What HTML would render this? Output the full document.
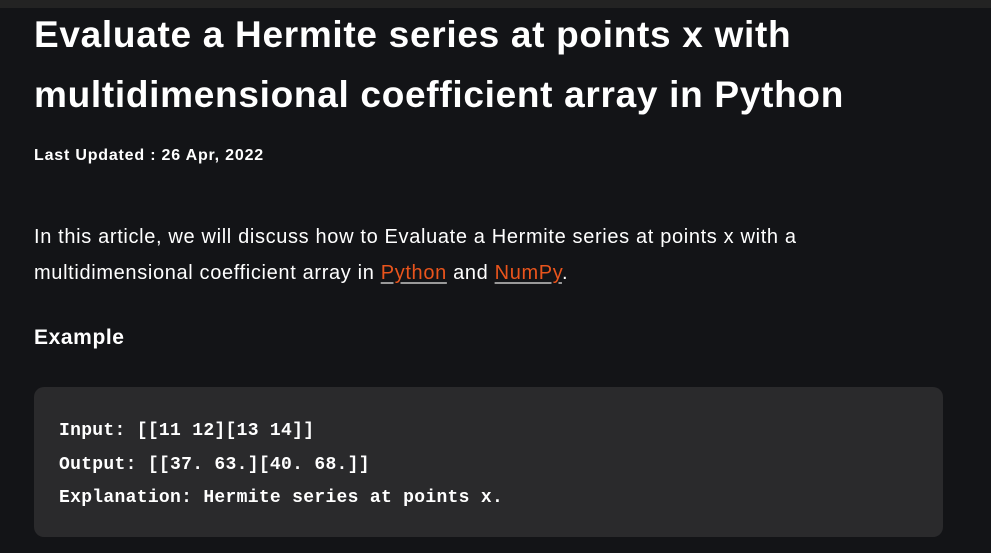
<!DOCTYPE html>
<html><head><meta charset="utf-8"><style>
html,body{margin:0;padding:0;}
body{width:991px;height:553px;background:#131417;overflow:hidden;position:relative;font-family:"Liberation Sans",sans-serif;color:#fff;}
.top{position:absolute;left:0;top:0;width:991px;height:8px;background:#232323;}
h1{position:absolute;left:34px;top:5px;margin:0;font-size:37px;line-height:60px;font-weight:bold;letter-spacing:0.7px;width:950px;white-space:nowrap;}
.date{position:absolute;left:34px;top:147px;font-size:16px;font-weight:bold;letter-spacing:0.8px;}
.p{position:absolute;left:34px;top:219px;font-size:20px;line-height:36px;letter-spacing:0.65px;width:950px;white-space:nowrap;}
.p a{color:#e9541c;text-decoration:underline;text-decoration-color:#999;text-underline-offset:3px;}
.ex{position:absolute;left:34px;top:326px;font-size:21px;font-weight:bold;letter-spacing:0.6px;}
.code{position:absolute;left:34px;top:387px;width:909px;height:150px;background:#2a2a2c;border-radius:10px;}
.code pre{margin:0;position:absolute;left:25px;top:28px;font-family:"Liberation Mono",monospace;font-weight:bold;font-size:18px;line-height:33.5px;letter-spacing:0.3px;color:#fff;}
</style></head><body>
<div class="top"></div>
<h1>Evaluate a Hermite series at points x with<br>multidimensional coefficient array in Python</h1>
<div class="date">Last Updated : 26 Apr, 2022</div>
<div class="p">In this article, we will discuss how to Evaluate a Hermite series at points x with a<br>multidimensional coefficient array in <a>Python</a> and <a>NumPy</a>.</div>
<div class="ex">Example</div>
<div class="code"><pre>Input: [[11 12][13 14]]
Output: [[37. 63.][40. 68.]]
Explanation: Hermite series at points x.</pre></div>
</body></html>
